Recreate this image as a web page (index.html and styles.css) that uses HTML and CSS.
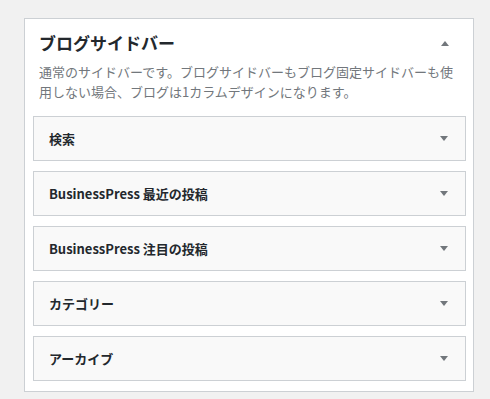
FILE: index.html
```html
<!DOCTYPE html>
<html>
<head>
    <title>ウィジェット</title>
    <link rel="stylesheet" href="styles.css">
</head>
<body>
    <div class="sidebar">
        <div class="sidebar-header">
            <h2>ブログサイドバー</h2>
            <span class="arrow arrow-up"></span>
        </div>
        <p class="sidebar-description">通常のサイドバーです。ブログサイドバーもブログ固定サイドバーも使用しない場合、ブログは1カラムデザインになります。</p>
        <div class="widget">
            <h3>検索</h3>
            <span class="arrow arrow-down"></span>
        </div>
        <div class="widget">
            <h3>BusinessPress 最近の投稿</h3>
            <span class="arrow arrow-down"></span>
        </div>
        <div class="widget">
            <h3>BusinessPress 注目の投稿</h3>
            <span class="arrow arrow-down"></span>
        </div>
        <div class="widget">
            <h3>カテゴリー</h3>
            <span class="arrow arrow-down"></span>
        </div>
        <div class="widget">
            <h3>アーカイブ</h3>
            <span class="arrow arrow-down"></span>
        </div>
    </div>
</body>
</html>
```

FILE: styles.css
```css
* { margin: 0; padding: 0; box-sizing: border-box; }
body { font-family: "Noto Sans CJK JP", "Noto Sans", sans-serif; background: #f1f1f1; color: #23282d; padding: 18px 0 0 24px; }
.sidebar { width: 450px; background: #fff; border: 1px solid #ccd0d4; padding: 0 7px 10px 8px; }
.sidebar-header { display: flex; align-items: center; justify-content: space-between; padding: 12px 17px 0 6px; }
.sidebar-header h2 { font-size: 17px; line-height: 24px; font-weight: 700; color: #23282d; }
.sidebar-description { font-size: 13px; line-height: 20px; color: #72777c; padding: 7px 6px 0 6px; margin-bottom: 14px; }
.widget { height: 45px; display: flex; align-items: center; justify-content: space-between; background: #f9f9f9; border: 1px solid #ccd0d4; padding: 0 17px 0 15px; margin-bottom: 10px; }
.widget:last-child { margin-bottom: 0; }
.widget h3 { font-size: 13px; font-weight: 700; color: #23282d; }
.arrow { width: 0; height: 0; border-left: 4px solid transparent; border-right: 4px solid transparent; }
.arrow-up { border-bottom: 5px solid #72777c; }
.arrow-down { border-top: 5px solid #72777c; }
```
